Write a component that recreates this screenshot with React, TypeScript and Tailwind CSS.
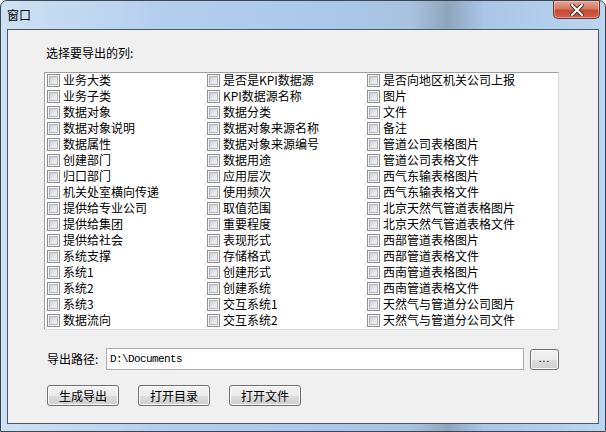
import React from "react";

const col1 = ["业务大类","业务子类","数据对象","数据对象说明","数据属性","创建部门","归口部门","机关处室横向传递","提供给专业公司","提供给集团","提供给社会","系统支撑","系统1","系统2","系统3","数据流向"];
const col2 = ["是否是KPI数据源","KPI数据源名称","数据分类","数据对象来源名称","数据对象来源编号","数据用途","应用层次","使用频次","取值范围","重要程度","表现形式","存储格式","创建形式","创建系统","交互系统1","交互系统2"];
const col3 = ["是否向地区机关公司上报","图片","文件","备注","管道公司表格图片","管道公司表格文件","西气东输表格图片","西气东输表格文件","北京天然气管道表格图片","北京天然气管道表格文件","西部管道表格图片","西部管道表格文件","西南管道表格图片","西南管道表格文件","天然气与管道分公司图片","天然气与管道分公司文件"];

const font = { fontFamily: '"Noto Sans CJK SC", "Noto Sans", sans-serif' };

function Check({ label }: { label: string }) {
  return (
    <div className="h-[16px] flex items-center">
      <span className="w-[13px] h-[13px] border border-[#8e8f8f] bg-[#f4f4f4] p-[1px] flex shrink-0">
        <span className="flex-1 border border-[#b4b8bd] bg-[linear-gradient(135deg,#cdd1d6,#f4f4f5)]" />
      </span>
      <span className="ml-[3px] text-[12px] leading-[14px] text-black whitespace-nowrap">{label}</span>
    </div>
  );
}

function Btn({ children, className }: { children: React.ReactNode; className?: string }) {
  return (
    <div
      className={
        "h-[21px] rounded-[3px] border border-[#707070] flex items-center justify-center text-[12px] text-black bg-[linear-gradient(to_bottom,#f2f2f2_0%,#ebebeb_50%,#dddddd_51%,#cfcfcf_100%)] shadow-[inset_0_0_0_1px_#fbfbfb] " +
        (className ?? "")
      }
    >
      {children}
    </div>
  );
}

export default function App() {
  const cols = [col1, col2, col3];
  return (
    <div
      style={font}
      className="w-[606px] h-[432px] flex flex-col rounded-t-[7px] border border-[#3c4652] bg-[linear-gradient(to_right,#cfe1f4_0%,#b5d0ee_25%,#a9c8ea_55%,#a8c2de_68%,#8ea5bd_74%,#a9c6e6_80%,#bcd6f1_100%)] overflow-hidden"
    >
      <div className="h-[28px] flex justify-between shrink-0">
        <div className="pl-[6px] pt-[7px] text-[12px] leading-[14px] text-black">窗口</div>
        <div className="mr-[5px] w-[47px] h-[18px] rounded-b-[5px] border border-t-0 border-[#6b3a33] bg-[linear-gradient(to_bottom,#e8a596_0%,#d47a66_45%,#c14b32_55%,#d2604a_100%)] flex items-center justify-center shadow-[inset_0_0_0_1px_rgba(255,220,210,0.45)]">
          <svg width="14" height="12" viewBox="0 0 14 12">
            <path d="M2 1 L12 11 M12 1 L2 11" stroke="#4a2a25" strokeWidth="4" strokeLinecap="square" />
            <path d="M2 1 L12 11 M12 1 L2 11" stroke="#ffffff" strokeWidth="2" strokeLinecap="square" />
          </svg>
        </div>
      </div>
      <div className="mx-[6px] mb-[7px] flex-1 bg-[#f0f0f0] border border-[#4b5968] flex flex-col pl-[36px]">
        <div className="mt-[15px] ml-[2px] text-[12px] leading-[16px] text-black">选择要导出的列:</div>
        <div className="mt-[11px] w-[515px] h-[258px] bg-white border border-[#a0a0a0] border-r-[#dcdcdc] border-b-[#dcdcdc] pl-[2px] grid grid-cols-[160px_160px_160px] overflow-hidden">
          {cols.map((c, i) => (
            <div key={i} className="flex flex-col -mt-[1px]">
              {c.map((l) => (
                <Check key={l} label={l} />
              ))}
            </div>
          ))}
        </div>
        <div className="mt-[18px] flex items-center h-[22px]">
          <span className="ml-[3px] text-[12px] text-black w-[59px]">导出路径:</span>
          <div className="w-[418px] h-[22px] bg-white border border-[#abadb3] flex items-center pl-[3px]">
            <span className="text-[11px] text-black" style={{ fontFamily: '"Liberation Mono", monospace', letterSpacing: "-0.6px" }}>D:\Documents</span>
          </div>
          <Btn className="ml-[6px] w-[29px] !h-[21px]">
            <span className="text-[10px] leading-[10px] tracking-[1px] -mt-[2px]">...</span>
          </Btn>
        </div>
        <div className="mt-[15px] ml-[3px] flex gap-[19px]">
          <Btn className="w-[72px]">生成导出</Btn>
          <Btn className="w-[72px]">打开目录</Btn>
          <Btn className="w-[72px]">打开文件</Btn>
        </div>
      </div>
    </div>
  );
}
